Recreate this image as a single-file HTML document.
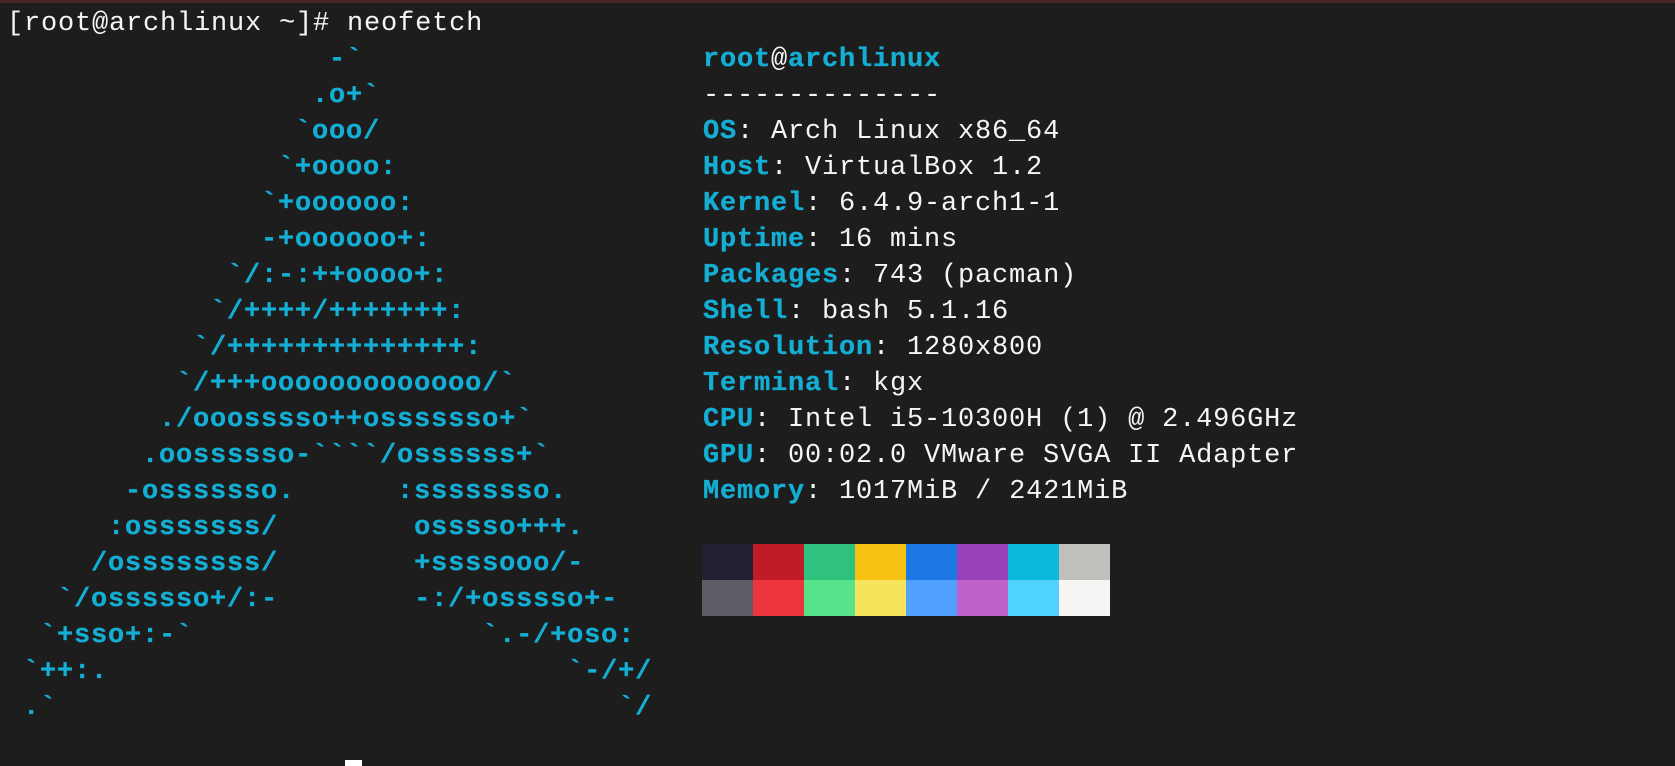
<!DOCTYPE html>
<html lang="en">
<head>
<meta charset="utf-8">
<title>neofetch</title>
<style>
html,body{margin:0;padding:0;background:#1e1e1e;}
#t{position:relative;width:1675px;height:766px;overflow:hidden;background:#1d1d1d;}
#bar{position:absolute;left:0;top:0;width:1675px;height:3px;background:#452629;}
pre{position:absolute;margin:0;font-family:"Liberation Mono",monospace;font-size:27px;letter-spacing:.8px;line-height:36px;color:#f6f5f4;white-space:pre;}
#cmd{left:7px;top:6px;}
#art{left:6px;top:42px;color:#14aed4;font-weight:bold;-webkit-text-stroke:.3px #14aed4;}
#info{left:703px;top:42px;}
b{color:#14aed4;font-weight:bold;-webkit-text-stroke:.3px #14aed4;}
.s{position:absolute;width:51px;height:36px;}
#cur{position:absolute;left:345px;top:760px;width:17px;height:6px;background:#fff;}
</style>
</head>
<body>
<div id="t">
<div id="bar"></div>
<pre id="cmd">[root@archlinux ~]# neofetch</pre>
<pre id="art">                   -&#96;
                  .o+&#96;
                 &#96;ooo/
                &#96;+oooo:
               &#96;+oooooo:
               -+oooooo+:
             &#96;/:-:++oooo+:
            &#96;/++++/+++++++:
           &#96;/++++++++++++++:
          &#96;/+++ooooooooooooo/&#96;
         ./ooosssso++osssssso+&#96;
        .oossssso-&#96;&#96;&#96;&#96;/ossssss+&#96;
       -osssssso.      :ssssssso.
      :osssssss/        osssso+++.
     /ossssssss/        +ssssooo/-
   &#96;/ossssso+/:-        -:/+osssso+-
  &#96;+sso+:-&#96;                 &#96;.-/+oso:
 &#96;++:.                           &#96;-/+/
 .&#96;                                 &#96;/</pre>
<pre id="info"><b>root</b>@<b>archlinux</b>
--------------
<b>OS</b>: Arch Linux x86_64
<b>Host</b>: VirtualBox 1.2
<b>Kernel</b>: 6.4.9-arch1-1
<b>Uptime</b>: 16 mins
<b>Packages</b>: 743 (pacman)
<b>Shell</b>: bash 5.1.16
<b>Resolution</b>: 1280x800
<b>Terminal</b>: kgx
<b>CPU</b>: Intel i5-10300H (1) @ 2.496GHz
<b>GPU</b>: 00:02.0 VMware SVGA II Adapter
<b>Memory</b>: 1017MiB / 2421MiB</pre>
<div class="s" style="left:702px;top:544px;background:#241f31"></div>
<div class="s" style="left:753px;top:544px;background:#c01c28"></div>
<div class="s" style="left:804px;top:544px;background:#2ec27e"></div>
<div class="s" style="left:855px;top:544px;background:#f5c211"></div>
<div class="s" style="left:906px;top:544px;background:#1e78e4"></div>
<div class="s" style="left:957px;top:544px;background:#9841bb"></div>
<div class="s" style="left:1008px;top:544px;background:#0ab9dc"></div>
<div class="s" style="left:1059px;top:544px;background:#c0bfbc"></div>
<div class="s" style="left:702px;top:580px;background:#5e5c64"></div>
<div class="s" style="left:753px;top:580px;background:#ed333b"></div>
<div class="s" style="left:804px;top:580px;background:#57e389"></div>
<div class="s" style="left:855px;top:580px;background:#f8e45c"></div>
<div class="s" style="left:906px;top:580px;background:#51a1ff"></div>
<div class="s" style="left:957px;top:580px;background:#c061cb"></div>
<div class="s" style="left:1008px;top:580px;background:#4fd2fd"></div>
<div class="s" style="left:1059px;top:580px;background:#f6f5f4"></div>
<div id="cur"></div>
</div>
</body>
</html>
